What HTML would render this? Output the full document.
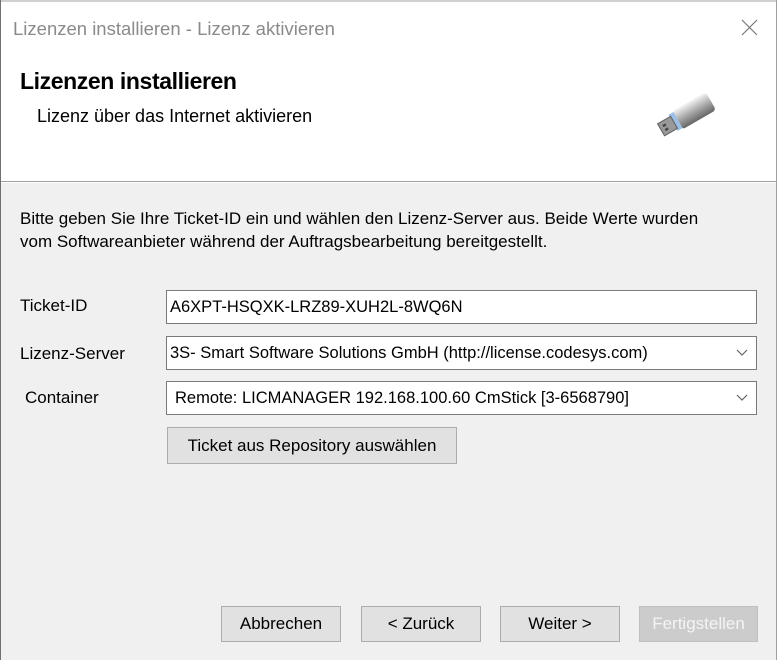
<!DOCTYPE html>
<html><head><meta charset="utf-8"><style>
body{margin:0;width:777px;height:660px;overflow:hidden;background:#f0f0f0;font-family:"Liberation Sans",sans-serif;position:relative;color:#000}
.a{position:absolute;white-space:nowrap}
.t{font-size:17px}
.box{position:absolute;background:#fff;border:1px solid #7a7a7a;box-sizing:border-box;font-size:16.5px;padding-left:3px;display:flex;align-items:center}
.btn{position:absolute;background:#e1e1e1;border:1px solid #adadad;box-sizing:border-box;font-size:17px;display:flex;align-items:center;justify-content:center}
.chev{position:absolute;right:8px;top:50%;margin-top:-4px}
</style></head><body>
<div class="a" style="left:0;top:0;width:777px;height:181px;background:#fff"></div>
<div class="a" style="left:0;top:0;width:777px;height:2px;background:#d0d0d0"></div>
<div class="a" style="left:0;top:0;width:1px;height:660px;background:#707070"></div>
<div class="a" style="left:776px;top:0;width:1px;height:660px;background:#a0a0a0"></div>
<div class="a" style="left:13px;top:18px;color:#8a8a8a;font-size:18.5px">Lizenzen installieren - Lizenz aktivieren</div>
<svg class="a" style="left:741px;top:19px" width="17" height="17"><path d="M1 1L16 16M16 1L1 16" stroke="#777" stroke-width="1.2"/></svg>
<div class="a" style="left:20px;top:68px;font-size:23px;font-weight:bold;letter-spacing:-0.4px">Lizenzen installieren</div>
<div class="a" style="left:37px;top:106px;font-size:18px">Lizenz über das Internet aktivieren</div>
<svg class="a" style="left:655px;top:86px" width="60" height="60">
<defs><linearGradient id="g" x1="0" y1="0" x2="0" y2="1"><stop offset="0" stop-color="#f4f4f4"/><stop offset=".5" stop-color="#aaa"/><stop offset="1" stop-color="#666"/></linearGradient></defs>
<g transform="translate(30,30) rotate(-30) scale(1.15)">
<rect x="-8" y="-9" width="34" height="18" rx="3" fill="url(#g)"/>
<rect x="-12" y="-8" width="5" height="16" fill="#9cc0e6"/>
<rect x="-24" y="-6" width="13" height="12" fill="#999" stroke="#666" stroke-width="1"/>
<rect x="-21" y="-3" width="3" height="2" fill="#444"/><rect x="-21" y="1" width="3" height="2" fill="#444"/>
</g>
</svg>
<div class="a" style="left:1px;top:181px;width:775px;height:1px;background:#a0a0a0"></div>
<div class="a" style="left:1px;top:182px;width:775px;height:1px;background:#fff"></div>
<div class="a t" style="left:20px;top:207px;line-height:23px">Bitte geben Sie Ihre Ticket-ID ein und wählen den Lizenz-Server aus. Beide Werte wurden<br>vom Softwareanbieter während der Auftragsbearbeitung bereitgestellt.</div>
<div class="a t" style="left:20px;top:296px">Ticket-ID</div>
<div class="a t" style="left:20px;top:344px">Lizenz-Server</div>
<div class="a t" style="left:25px;top:388px">Container</div>
<div class="box" style="left:166px;top:290px;width:591px;height:34px">A6XPT-HSQXK-LRZ89-XUH2L-8WQ6N</div>
<div class="box" style="left:166px;top:336px;width:591px;height:34px">3S- Smart Software Solutions GmbH (http://license.codesys.com)<svg class="chev" width="12" height="8"><path d="M1 1L6 6L11 1" fill="none" stroke="#666" stroke-width="1.2"/></svg></div>
<div class="box" style="left:166px;top:381px;width:591px;height:34px;padding-left:8px">Remote: LICMANAGER 192.168.100.60 CmStick [3-6568790]<svg class="chev" width="12" height="8"><path d="M1 1L6 6L11 1" fill="none" stroke="#666" stroke-width="1.2"/></svg></div>
<div class="btn" style="left:167px;top:427px;width:290px;height:37px">Ticket aus Repository auswählen</div>
<div class="btn" style="left:221px;top:606px;width:120px;height:36px">Abbrechen</div>
<div class="btn" style="left:361px;top:606px;width:120px;height:36px">&lt; Zurück</div>
<div class="btn" style="left:500px;top:606px;width:120px;height:36px">Weiter &gt;</div>
<div class="btn" style="left:639px;top:606px;width:119px;height:36px;background:#ccc;border-color:#bfbfbf;color:#f4f4f4">Fertigstellen</div>
</body></html>
